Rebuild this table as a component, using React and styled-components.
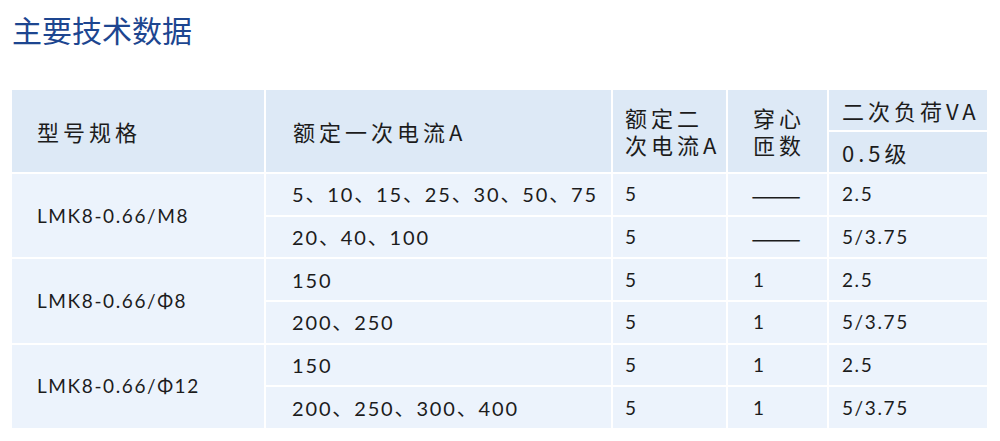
import React from 'react';
import styled, { createGlobalStyle } from 'styled-components';

const GlobalStyle = createGlobalStyle`
  body {
    margin: 0;
    background: #fff;
    font-family: Lato, "Noto Sans CJK SC", sans-serif;
  }
`;

const Page = styled.div`
  width: 1000px;
  height: 441px;
  padding: 9px 0 0 12px;
  box-sizing: border-box;
`;

const Title = styled.h2`
  margin: 0;
  height: 40px;
  line-height: 40px;
  font-family: "Noto Sans CJK SC", sans-serif;
  font-weight: 400;
  font-size: 30px;
  color: #1d4690;
`;

const Grid = styled.div`
  margin-top: 41px;
  display: grid;
  grid-template-columns: 252px 345px 113px 99px 158px;
  grid-template-rows: 40px 40px repeat(6, 40.7px);
  gap: 2px;
`;

const Cell = styled.div`
  display: flex;
  align-items: center;
  padding-left: ${p => p.$pad}px;
  background: ${p => (p.$head ? '#dde9f6' : '#ecf3fc')};
  color: #1c1c1c;
  grid-row: ${p => p.$rows || 'auto'};
  font-family: ${p => (p.$head ? '"Noto Sans CJK SC", sans-serif' : 'Lato, "Noto Sans CJK SC", sans-serif')};
  font-size: ${p => (p.$head ? 22 : p.$size || 19)}px;
  letter-spacing: ${p => (p.$head ? 4 : p.$ls || 1.6)}px;
  line-height: ${p => (p.$head ? 27 : 22)}px;
  white-space: nowrap;
`;

const Lines = styled.div`
  display: flex;
  flex-direction: column;
`;

const Dash = styled.span`
  display: inline-block;
  margin-left: -2px;
  font-family: "Noto Sans CJK SC", sans-serif;
  font-size: 22px;
  letter-spacing: 0;
  transform: scaleX(1.36);
  transform-origin: left center;
`;

const groups = [
  {
    model: 'LMK8-0.66/M8',
    rows: [
      ['5、10、15、25、30、50、75', '5', null, '2.5'],
      ['20、40、100', '5', null, '5/3.75'],
    ],
  },
  {
    model: 'LMK8-0.66/Φ8',
    rows: [
      ['150', '5', '1', '2.5'],
      ['200、250', '5', '1', '5/3.75'],
    ],
  },
  {
    model: 'LMK8-0.66/Φ12',
    rows: [
      ['150', '5', '1', '2.5'],
      ['200、250、300、400', '5', '1', '5/3.75'],
    ],
  },
];

export default function App() {
  return (
    <Page>
      <GlobalStyle />
      <Title>主要技术数据</Title>
      <Grid>
        <Cell $head $pad={25} $rows="span 2">型号规格</Cell>
        <Cell $head $pad={27} $rows="span 2">额定一次电流A</Cell>
        <Cell $head $pad={12} $rows="span 2">
          <Lines><span>额定二</span><span>次电流A</span></Lines>
        </Cell>
        <Cell $head $pad={25} $rows="span 2">
          <Lines><span>穿心</span><span>匝数</span></Lines>
        </Cell>
        <Cell $head $pad={13}>二次负荷VA</Cell>
        <Cell $head $pad={13}>0.5级</Cell>

        {groups.map(g => (
          <React.Fragment key={g.model}>
            <Cell $pad={25} $rows="span 2">{g.model}</Cell>
            {g.rows.map((r, i) => (
              <React.Fragment key={i}>
                <Cell $pad={26} $size={20} $ls={1.85}>{r[0]}</Cell>
                <Cell $pad={12}>{r[1]}</Cell>
                <Cell $pad={25}>{r[2] || <Dash>——</Dash>}</Cell>
                <Cell $pad={13}>{r[3]}</Cell>
              </React.Fragment>
            ))}
          </React.Fragment>
        ))}
      </Grid>
    </Page>
  );
}
